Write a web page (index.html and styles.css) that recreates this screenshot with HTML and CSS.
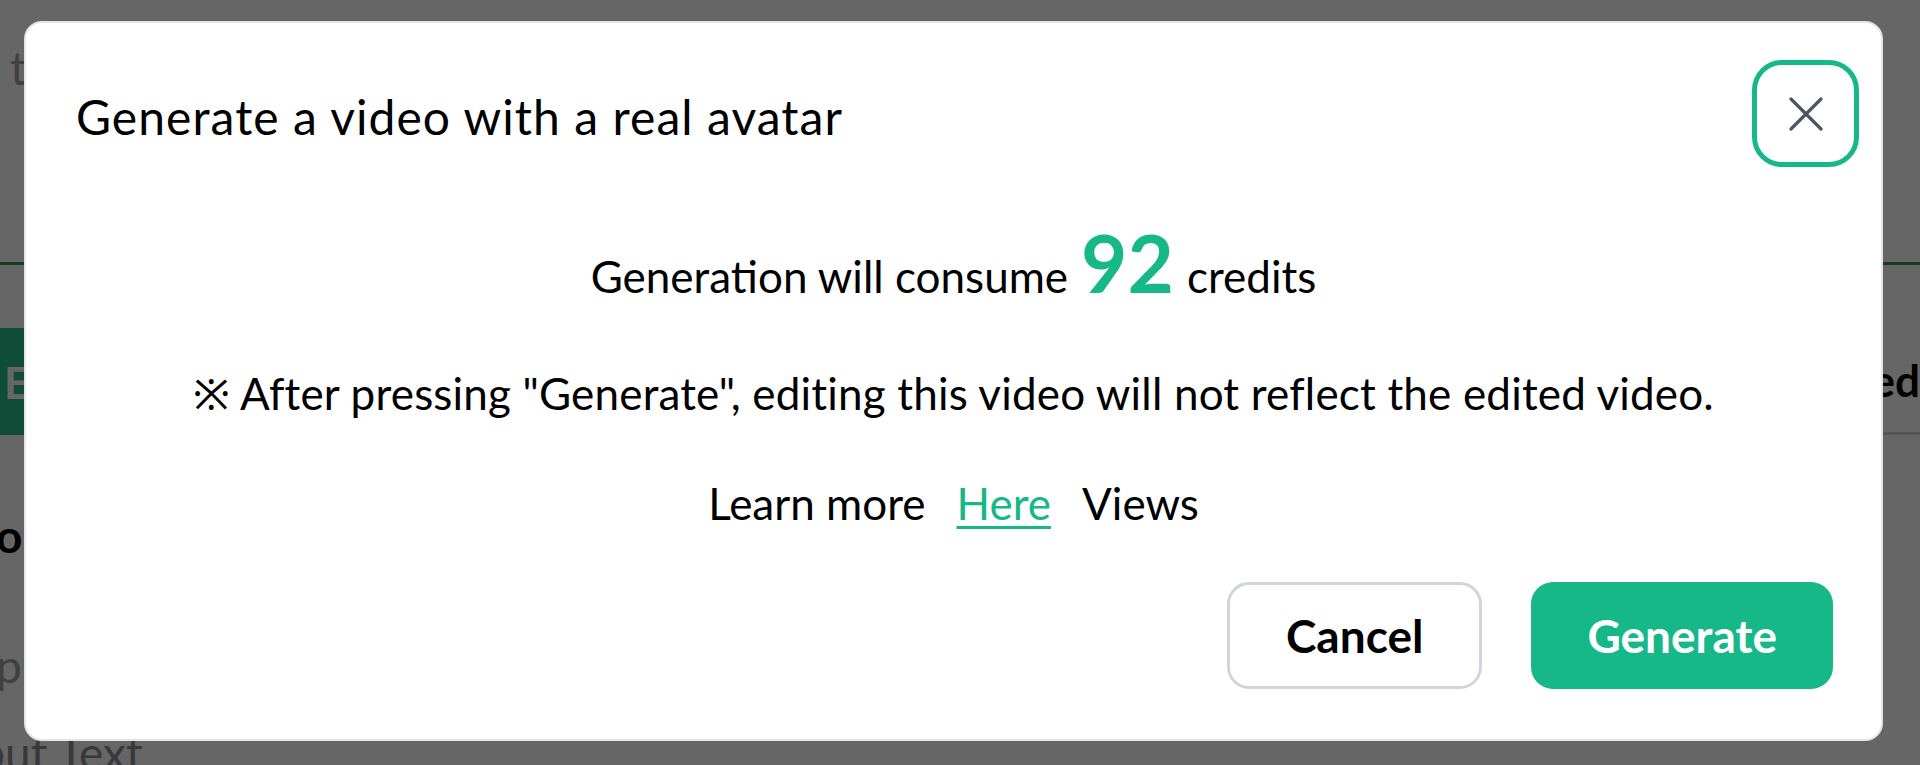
FILE: index.html
```html
<!DOCTYPE html>
<html lang="en">
<head>
<meta charset="utf-8">
<title>Generate a video with a real avatar</title>
<link rel="stylesheet" href="styles.css">
</head>
<body>
<div class="app">
  <div class="topbar"><span class="placeholder">text</span></div>
  <div class="tabline"></div>
  <div class="toolrow">
    <div class="greenbtn">Edit</div>
    <div class="tabright">Selected</div>
  </div>
  <div class="section-title">o</div>
  <div class="field-hint">p</div>
  <div class="field-label">Input Text</div>
</div>

<div class="overlay"></div>

<div class="modal" role="dialog" aria-modal="true">
  <div class="modal-header">
    <h2 class="modal-title">Generate a video with a real avatar</h2>
    <button class="close-btn" aria-label="Close">
      <svg viewBox="0 0 34 34" width="34" height="34" aria-hidden="true">
        <path d="M2 2 L32 32 M32 2 L2 32" stroke="#4b5563" stroke-width="3.2" stroke-linecap="round" fill="none"/>
      </svg>
    </button>
  </div>
  <div class="modal-body">
    <p class="credits"><span>Generation will consume</span><span class="credit-num">92</span><span>credits</span></p>
    <p class="note">※ After pressing "Generate", editing this video will not reflect the edited video.</p>
    <p class="learn"><span>Learn more</span><a class="link" href="#">Here</a><span>Views</span></p>
  </div>
  <div class="modal-footer">
    <button class="btn btn-cancel">Cancel</button>
    <button class="btn btn-generate">Generate</button>
  </div>
</div>
</body>
</html>
```

FILE: styles.css
```css
* { box-sizing: border-box; }
html, body { margin: 0; padding: 0; }
body {
  width: 1920px;
  height: 765px;
  overflow: hidden;
  background: #ffffff;
  font-family: "Lato", "Noto Sans", sans-serif;
  color: #000;
  position: relative;
}

/* background application (mostly hidden by the dialog) */
.app {
  display: flex;
  flex-direction: column;
  padding-left: 10px;
}
.topbar {
  height: 262px;
  padding-top: 40px;
}
.placeholder {
  font-size: 46px;
  color: #a3a3a3;
}
.tabline {
  height: 3px;
  margin-left: -10px;
  background: #2f9a52;
}
.toolrow {
  display: flex;
  justify-content: space-between;
  margin-top: 63px;
  margin-left: -10px;
  height: 107px;
}
.greenbtn {
  width: 120px;
  background: #26c08c;
  color: #fff;
  font-size: 44px;
  font-weight: 700;
  display: flex;
  align-items: center;
  padding-left: 4px;
}
.tabright {
  width: 200px;
  border-bottom: 3px solid #d1d5db;
  font-size: 44px;
  font-weight: 700;
  text-align: right;
  padding-top: 26px;
}
.section-title {
  margin-top: 73px;
  font-size: 46px;
  font-weight: 700;
  margin-left: -14px;
}
.field-hint {
  margin-top: 75px;
  font-size: 46px;
  color: #a3a3a3;
  margin-left: -14px;
}
.field-label {
  margin-top: 32px;
  font-size: 46px;
  color: #8f8f8f;
  margin-left: -69px;
}

.overlay {
  position: absolute;
  inset: 0;
  background: rgba(0, 0, 0, 0.6);
}

/* dialog */
.modal {
  position: absolute;
  left: 24px;
  top: 21px;
  width: 1859px;
  height: 720px;
  background: #fff;
  border: 2px solid #e3e5e8;
  border-radius: 18px;
  display: flex;
  flex-direction: column;
}
.modal-header {
  display: flex;
  justify-content: space-between;
  align-items: flex-start;
  padding: 37px 22px 0 50px;
}
.modal-title {
  margin: 29px 0 0 0;
  font-size: 48px;
  letter-spacing: 1.05px;
  font-weight: 400;
  line-height: 56px;
  color: #000;
}
.close-btn {
  width: 107px;
  height: 107px;
  border: 5px solid #17b887;
  border-radius: 30px;
  background: #fff;
  padding: 0;
  display: flex;
  align-items: center;
  justify-content: center;
  cursor: pointer;
}

.modal-body {
  display: flex;
  flex-direction: column;
  align-items: center;
  font-size: 44px;
  line-height: 53px;
}
.modal-body p { margin: 0; }
.credits {
  display: flex;
  align-items: baseline;
  gap: 13px;
  margin-top: 55px !important;
}
.credit-num {
  font-size: 80px;
  line-height: 1;
  font-weight: 700;
  color: #17b887;
}
.note {
  margin-top: 64px !important;
  letter-spacing: 0.18px;
}
.learn {
  display: flex;
  gap: 31px;
  margin-top: 57px !important;
}
.link {
  color: #17b887;
  text-decoration: underline;
  text-decoration-thickness: 3px;
  text-underline-offset: 6px;
}

.modal-footer {
  display: flex;
  justify-content: flex-end;
  gap: 49px;
  padding-right: 48px;
  margin-top: 52px;
}
.btn {
  height: 107px;
  border-radius: 22px;
  font-family: inherit;
  font-size: 46px;
  font-weight: 700;
  padding: 0 56px;
  cursor: pointer;
}
.btn-cancel {
  background: #fff;
  color: #000;
  border: 3px solid #d1d5db;
}
.btn-generate {
  background: #17b887;
  color: #fff;
  border: none;
}
```
